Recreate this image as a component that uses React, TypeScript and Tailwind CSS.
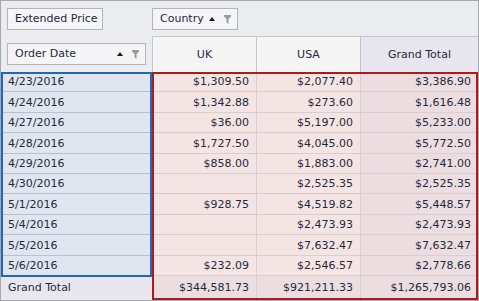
const rows = [
  { date: "4/23/2016", uk: "$1,309.50", usa: "$2,077.40", total: "$3,386.90" },
  { date: "4/24/2016", uk: "$1,342.88", usa: "$273.60", total: "$1,616.48" },
  { date: "4/27/2016", uk: "$36.00", usa: "$5,197.00", total: "$5,233.00" },
  { date: "4/28/2016", uk: "$1,727.50", usa: "$4,045.00", total: "$5,772.50" },
  { date: "4/29/2016", uk: "$858.00", usa: "$1,883.00", total: "$2,741.00" },
  { date: "4/30/2016", uk: "", usa: "$2,525.35", total: "$2,525.35" },
  { date: "5/1/2016", uk: "$928.75", usa: "$4,519.82", total: "$5,448.57" },
  { date: "5/4/2016", uk: "", usa: "$2,473.93", total: "$2,473.93" },
  { date: "5/5/2016", uk: "", usa: "$7,632.47", total: "$7,632.47" },
  { date: "5/6/2016", uk: "$232.09", usa: "$2,546.57", total: "$2,778.66" },
];

function SortUp() {
  return (
    <svg width="6" height="4" viewBox="0 0 6 4" className="shrink-0">
      <path d="M3 0L6 4H0z" fill="#1a1a1a" />
    </svg>
  );
}

function FilterIcon() {
  return (
    <svg width="7" height="9" viewBox="0 0 7 9" className="shrink-0">
      <path d="M0 0h7v1.5L4.5 4v5L2.5 7.5V4L0 1.5z" fill="#9a9aa2" />
    </svg>
  );
}

function FieldButton({
  label,
  width,
  sort,
}: {
  readonly label: string;
  readonly width: string;
  readonly sort?: boolean;
}) {
  return (
    <div
      className={`${width} h-[22px] flex items-center pl-[7px] pr-[6px] bg-[#f5f5f7] border border-[#b4b4bc] text-[#1f2a3d]`}
    >
      <span className="flex-1 whitespace-nowrap">{label}</span>
      {sort && (
        <div className="flex items-center gap-[9px]">
          <SortUp />
          <FilterIcon />
        </div>
      )}
    </div>
  );
}

export default function App() {
  return (
    <div
      className="relative w-[479px] h-[301px] border border-[#a8a8b0] bg-[#ebecf0] text-[11px] text-[#1f2a3d] overflow-hidden"
      style={{ fontFamily: '"DejaVu Sans", Verdana, sans-serif' }}
    >
      {/* filter area */}
      <div className="flex h-[35px] pt-[7px]">
        <div className="w-[151px] pl-[6px]">
          <FieldButton label="Extended Price" width="w-[96px]" />
        </div>
        <FieldButton label="Country" width="w-[86px]" sort />
      </div>

      {/* column header row */}
      <div className="flex h-[36px]">
        <div className="w-[151px] pl-[6px] pt-[7px]">
          <FieldButton label="Order Date" width="w-[139px]" sort />
        </div>
        <div className="w-[104px] pt-px flex items-center justify-center bg-[#f5f5f5] border-t border-l border-[#c6c6ce]">
          UK
        </div>
        <div className="w-[104px] pt-px flex items-center justify-center bg-[#f5f5f5] border-t border-l border-[#c6c6ce]">
          USA
        </div>
        <div className="flex-1 pt-px flex items-center justify-center bg-[#e7e6ee] border-t border-l border-[#c6c6ce]">
          Grand Total
        </div>
      </div>

      {/* data rows */}
      <div className="flex flex-col">
        {rows.map((r) => (
          <div key={r.date} className="flex h-[20.4px]">
            <div className="w-[151px] pl-[7px] pt-[2px] flex items-center bg-[#dfe6ef] border-b border-[#b7c1cf]">
              {r.date}
            </div>
            <div className="w-[104px] pr-[7px] pt-[2px] flex items-center justify-end bg-[#f5e4e4] border-b border-l border-[#dccdcf]">
              {r.uk}
            </div>
            <div className="w-[104px] pr-[7px] pt-[2px] flex items-center justify-end bg-[#f5e4e4] border-b border-l border-[#dccdcf]">
              {r.usa}
            </div>
            <div className="flex-1 pr-[7px] pt-[2px] flex items-center justify-end bg-[#ecdde1] border-b border-l border-[#dccdcf]">
              {r.total}
            </div>
          </div>
        ))}
        <div className="flex h-[25px]">
          <div className="w-[151px] pl-[7px] flex items-center bg-[#e8e7ee]">
            Grand Total
          </div>
          <div className="w-[104px] pr-[7px] flex items-center justify-end bg-[#ecdde1] border-l border-[#dccdcf]">
            $344,581.73
          </div>
          <div className="w-[104px] pr-[7px] flex items-center justify-end bg-[#ecdde1] border-l border-[#dccdcf]">
            $921,211.33
          </div>
          <div className="flex-1 pr-[7px] flex items-center justify-end bg-[#ecdde1] border-l border-[#dccdcf]">
            $1,265,793.06
          </div>
        </div>
      </div>

      {/* selection frames */}
      <div className="absolute left-0 top-[71px] w-[151px] h-[205px] border-2 border-[#2266bb] pointer-events-none" />
      <div className="absolute left-[151px] top-[71px] right-0 bottom-0 border-2 border-[#b01a1a] pointer-events-none" />
    </div>
  );
}
